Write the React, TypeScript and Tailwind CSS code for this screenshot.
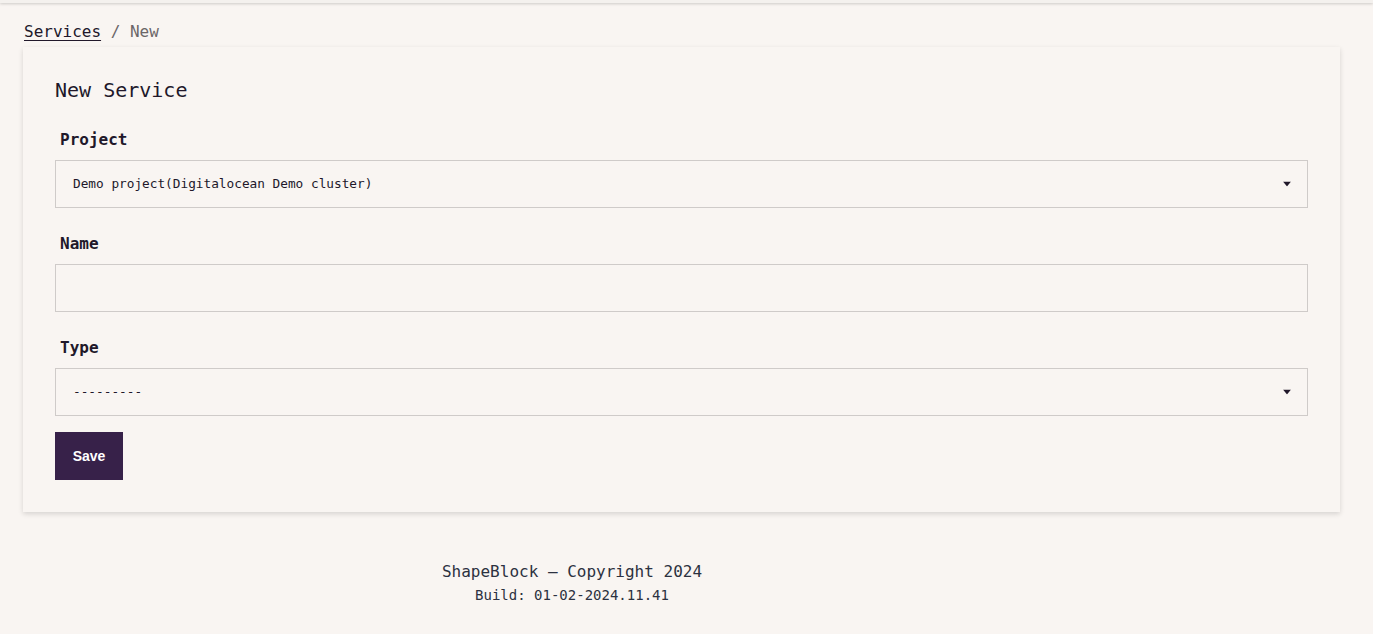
import React from 'react';

const mono = 'font-["DejaVu_Sans_Mono",monospace]';

function SelectArrow() {
  return (
    <svg className="pointer-events-none absolute right-[17px] top-1/2 -translate-y-1/2 w-[8px] h-[5px]" viewBox="0 0 8 5">
      <path d="M0 0h8L4 5z" fill="#21182a" />
    </svg>
  );
}

function Field({ label, children }: { label: string; children: React.ReactNode }) {
  return (
    <div className="flex flex-col">
      <label className="pl-[5px] pt-[1px] text-[16px] leading-[24px] font-bold text-[#21182a] mb-[8px]">{label}</label>
      {children}
    </div>
  );
}

export default function App() {
  return (
    <div className={`min-h-[634px] bg-[#f9f5f2] ${mono} text-[#21182a]`}>
      {/* top bar */}
      <div className="h-[3px] bg-[#f4f1ee] shadow-[0_1px_3px_rgba(0,0,0,0.18)]" />

      <div className="pl-[23px] pr-[33px]">
        {/* Breadcrumb */}
        <nav className="pt-[17px] text-[16px] leading-[24px] pl-[1px]">
          <a href="#services" className="underline underline-offset-[3px] text-[#21182a]">Services</a>
          <span className="text-[#6b6668]"> / New</span>
        </nav>

        {/* Card */}
        <div className="mt-[3px] bg-[#f9f5f2] shadow-[0_2px_5px_rgba(0,0,0,0.14)] px-[32px] pt-[30px] pb-[32px]">
          <h1 className="text-[20px] leading-[26px] text-[#21182a] mb-[24px]">New Service</h1>

          <div className="flex flex-col gap-[23px]">
            <Field label="Project">
              <div className="relative">
                <select className="appearance-none w-full h-[48px] border border-[#cfcbc9] bg-transparent px-[17px] text-[12.75px] text-[#21182a] outline-none">
                  <option>Demo project(Digitalocean Demo cluster)</option>
                </select>
                <SelectArrow />
              </div>
            </Field>

            <Field label="Name">
              <input className="w-full h-[48px] border border-[#cfcbc9] bg-transparent px-[17px] text-[12.75px] outline-none" />
            </Field>

            <Field label="Type">
              <div className="relative">
                <select className="appearance-none w-full h-[48px] border border-[#cfcbc9] bg-transparent px-[17px] text-[12.75px] text-[#21182a] outline-none">
                  <option>---------</option>
                </select>
                <SelectArrow />
              </div>
            </Field>
          </div>

          <button className='mt-[16px] h-[48px] w-[68px] bg-[#372149] text-white text-[14px] font-bold font-["Liberation_Sans",Arial,sans-serif]'>
            Save
          </button>
        </div>
      </div>

      {/* Footer */}
      <footer className="w-[1144px] text-center pt-[49px] text-[#2c3140]">
        <div className="text-[16px] leading-[22px]">ShapeBlock — Copyright 2024</div>
        <div className="text-[14px] leading-[20px] mt-[2px]">Build: 01-02-2024.11.41</div>
      </footer>
    </div>
  );
}
